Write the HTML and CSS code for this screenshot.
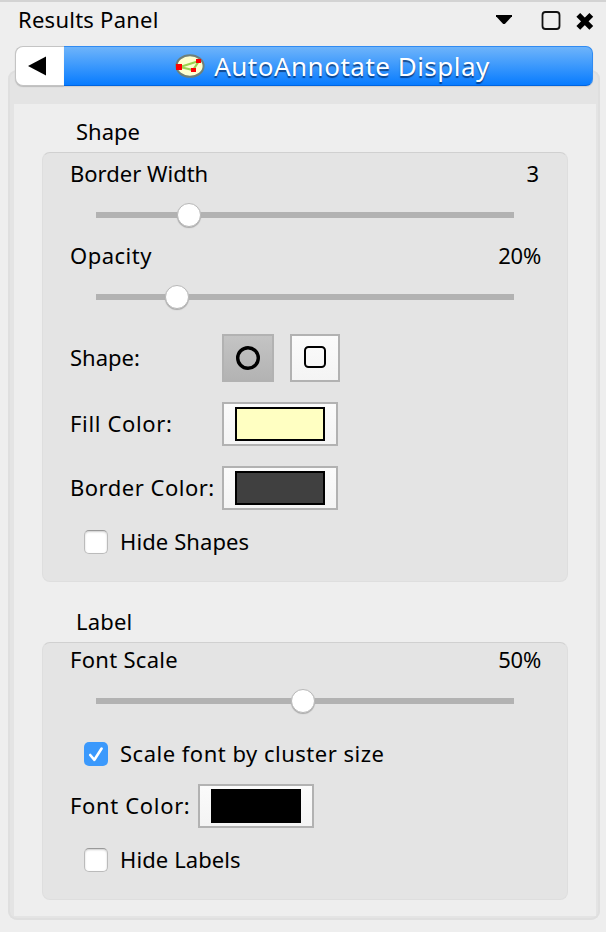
FILE: index.html
```html
<!DOCTYPE html>
<html lang="en">
<head>
<meta charset="utf-8">
<title>Results Panel</title>
<link rel="stylesheet" href="styles.css">
</head>
<body>
<header class="panel-header">
  <span class="panel-title">Results Panel</span>
  <svg class="window-icons" width="100" height="24" viewBox="0 0 100 24">
    <path d="M2 6h16v1.2L11.3 14.5q-1.3 1-2.6 0L2 7.2z" fill="#000"/>
    <rect x="48.5" y="3" width="17" height="17" rx="3" fill="none" stroke="#111" stroke-width="1.8"/>
    <path d="M84.3 5.9 97.3 18.9M97.3 5.9 84.3 18.9" stroke="#000" stroke-width="5.4" stroke-linecap="butt"/>
  </svg>
</header>
<main class="tab-pane">
  <nav class="tab-bar">
    <button class="back" aria-label="Back"><svg width="18" height="20" viewBox="0 0 18 20"><path d="M0 10 18 .5v19z"/></svg></button>
    <div class="tab">
      <svg width="30" height="26" viewBox="0 0 30 26">
        <ellipse cx="15" cy="13" rx="13.6" ry="10.8" fill="#ffffcf" stroke="#6f8078" stroke-width="2"/>
        <path d="M5 14 24 8M5 14l13 3 6-9" fill="none" stroke="#9bd34f" stroke-width="2.2"/>
        <path d="M1 11h6v6H1zM21 6h5v4h-5zM16 15h5v4h-5z" fill="#f00"/>
      </svg>
      <span class="tab-title">AutoAnnotate Display</span>
    </div>
  </nav>
  <div class="content">
    <h2 class="group-title">Shape</h2>
    <section class="group group-shape">
      <div class="row"><span>Border Width</span><span class="value value-width">3</span></div>
      <div class="slider"><i class="knob" style="margin-left: 81px"></i></div>
      <div class="row row-opacity"><span class="spaced">Opacity</span><span class="value">20%</span></div>
      <div class="slider"><i class="knob" style="margin-left: 69px"></i></div>
      <div class="fields">
        <span>Shape:</span>
        <div class="toggles">
          <button class="toggle selected" aria-label="Ellipse"><svg width="24" height="24"><circle cx="12" cy="12" r="10.3" fill="none" stroke="#000" stroke-width="3.4"/></svg></button>
          <button class="toggle" aria-label="Rectangle"><svg width="22" height="22"><rect x="1" y="1" width="20" height="20" rx="3.5" fill="none" stroke="#000" stroke-width="2"/></svg></button>
        </div>
        <span class="wide">Fill Color:</span>
        <button class="color" aria-label="Fill color"><i class="swatch yellow"></i></button>
        <span class="spaced">Border Color:</span>
        <button class="color" aria-label="Border color"><i class="swatch gray"></i></button>
      </div>
      <label class="check check-shapes"><i class="box"></i><span class="snug">Hide Shapes</span></label>
    </section>
    <h2 class="group-title title-label">Label</h2>
    <section class="group group-label">
      <div class="row"><span class="loose">Font Scale</span><span class="value">50%</span></div>
      <div class="slider"><i class="knob" style="margin-left: 195px"></i></div>
      <label class="check check-scale"><i class="box checked"><svg width="24" height="24"><path d="M6.2 13l4.2 4.8L17.6 6.5" fill="none" stroke="#fff" stroke-width="2.6" stroke-linecap="round" stroke-linejoin="round"/></svg></i><span class="spaced">Scale font by cluster size</span></label>
      <div class="font-color"><span class="wide">Font Color:</span><button class="color" aria-label="Font color"><i class="swatch black"></i></button></div>
      <label class="check check-labels"><i class="box"></i><span class="snug">Hide Labels</span></label>
    </section>
  </div>
</main>
</body>
</html>
```
FILE: styles.css
```css
* { box-sizing: border-box; }
body {
  margin: 0;
  width: 606px;
  height: 932px;
  overflow: hidden;
  background: #eee;
  border-top: 2px solid #d3d3d3;
  font: 22px/26px "Noto Sans", sans-serif;
  color: #000;
  white-space: nowrap;
}
svg { display: block; }
button { padding: 0; font: inherit; }
.spaced { letter-spacing: .5px; }
.wide { letter-spacing: .66px; }
.loose { letter-spacing: .3px; }
.snug { letter-spacing: .1px; }
.panel-header {
  height: 44px;
  padding: 4px 12px 0 18px;
  display: flex;
  justify-content: space-between;
}
.panel-title { letter-spacing: .25px; }
.window-icons { margin-top: 3px; }
.tab-pane {
  margin: 24px 6px 0 8px;
  height: 850px;
  padding: 0 4px 4px 6px;
  background: #e4e4e4;
  border-radius: 9px;
  box-shadow: inset 0 0 0 2px #dfdfdf;
}
.tab-bar {
  display: flex;
  width: 578px;
  height: 41px;
  margin: 0 0 -7px 1px;
  transform: translateY(-24px);
}
.back {
  width: 49px;
  height: 40px;
  border: 1px solid #c4c4c4;
  border-right: 0;
  border-radius: 8px 0 0 8px;
  background: #fff;
  box-shadow: 0 1px 1px #bbb;
  padding-left: 12px;
}
.tab {
  flex: 1;
  height: 40px;
  display: flex;
  align-items: center;
  justify-content: center;
  gap: 9px;
  border: 1px solid #308bf2;
  border-width: 1px 1px 1px 0;
  border-bottom-color: #0064df;
  border-radius: 0 7px 7px 0;
  background: linear-gradient(#6eb4fa, #087cff);
  box-shadow: 0 1px 1px #ccc;
  padding-left: 9px;
}
.tab-title {
  color: #fff;
  font-size: 26px;
  letter-spacing: .5px;
  text-shadow: 0 2px 1px rgba(0, 30, 80, .65);
}
.content {
  height: 812px;
  padding: 14px 28px 0;
  background: #eee;
}
.group-title {
  margin: 0;
  padding-left: 34px;
  height: 34px;
  font: inherit;
}
.title-label { margin-top: 26px; letter-spacing: .2px; }
.group {
  border: 1px solid #dedede;
  border-top: 1px solid #d0d0d0;
  border-radius: 8px;
  background: #e4e4e4;
}
.group-shape { height: 430px; padding: 7px 27px 0; }
.group-label { height: 258px; padding: 3px 27px 0; }
.row { display: flex; justify-content: space-between; height: 28px; }
.value { margin-right: -1px; letter-spacing: -.2px; }
.value-width { margin-right: 1px; }
.slider {
  width: 418px;
  height: 24px;
  margin: 15px 0 0 26px;
  background: linear-gradient(#b2b2b2, #b2b2b2) center / 100% 6px no-repeat;
}
.knob {
  display: block;
  width: 24px;
  height: 24px;
  border-radius: 50%;
  border: 1px solid #b8b8b8;
  background: #fff;
  box-shadow: 0 1px 1px #aaa;
}
.row-opacity { margin-top: 15px; }
.fields {
  display: grid;
  grid-template-columns: 152px auto;
  grid-template-rows: 48px 44px 44px;
  row-gap: 20px;
  align-items: center;
  justify-content: start;
  margin-top: 25px;
}
.fields > span, .check > span, .font-color > span { padding-bottom: 2px; }
.toggles { display: flex; gap: 16px; }
.toggle, .color {
  display: flex;
  align-items: center;
  justify-content: center;
  border: 2px solid #b2b2b2;
  background: linear-gradient(#fbfbfb, #f4f4f4);
}
.toggle { width: 50px; height: 48px; padding-bottom: 2px; }
.toggle.selected { width: 52px; padding: 0; background: linear-gradient(#c4c4c4, #b3b3b3); }
.color { width: 116px; height: 44px; }
.swatch { width: 90px; height: 34px; border: 2px solid #000; }
.yellow { background: #ffffc2; }
.gray { background: #404040; }
.black { background: #000; }
.check { display: flex; align-items: center; gap: 12px; height: 28px; margin-left: 14px; }
.check-shapes { margin-top: 18px; }
.check-scale { margin-top: 27px; }
.check-labels { margin-top: 18px; }
.box {
  width: 24px;
  height: 24px;
  border: 1px solid #bbb;
  border-top-color: #999;
  border-radius: 5px;
  background: #fff;
  box-shadow: inset 0 1px 2px #ccc;
}
.box.checked { border: 0; background: #3b99fc; box-shadow: none; }
.font-color { display: flex; align-items: center; justify-content: space-between; width: 244px; height: 44px; margin-top: 16px; }
```
